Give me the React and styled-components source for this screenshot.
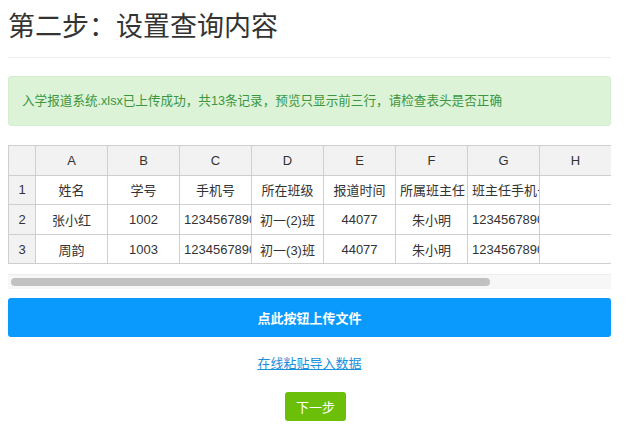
import React from "react";
import styled, { createGlobalStyle } from "styled-components";

const Global = createGlobalStyle`
  html, body { margin: 0; padding: 0; background: #fff; }
  body {
    padding: 8px;
    font-family: "Liberation Sans", Arial, "Noto Sans CJK SC", sans-serif;
    color: #333;
  }
`;

const Page = styled.div`
  width: 603px;
  display: flex;
  flex-direction: column;
`;

const Title = styled.h2`
  margin: 0;
  padding-top: 2px;
  font-size: 27px;
  line-height: 34px;
  font-weight: 400;
  color: #333;
`;

const Rule = styled.hr`
  margin: 13px 0 0;
  border: 0;
  border-top: 1px solid #eee;
`;

const Alert = styled.div`
  margin-top: 18px;
  height: 48px;
  padding: 0 13px;
  border: 1px solid #d3eecf;
  border-radius: 3px;
  background: #dcf3d8;
  color: #3b963d;
  font-size: 12.6px;
  line-height: 48px;
  white-space: nowrap;
`;

const Viewport = styled.div`
  margin-top: 19px;
  overflow: hidden;
`;

const Sheet = styled.table`
  border-collapse: collapse;
  table-layout: fixed;
  width: 747px;
`;

const Cell = styled.td`
  height: 29.6px;
  padding: 0 4px;
  border: 1px solid #cfcfcf;
  background: ${(p) => (p.$head ? "#f2f2f2" : "#fff")};
  font-size: 13px;
  color: #333;
  text-align: center;
  white-space: nowrap;
  overflow: hidden;
  box-sizing: border-box;
`;

const Track = styled.div`
  margin-top: 10px;
  height: 15px;
  box-sizing: border-box;
  border-top: 1px solid #ececec;
  background: #f7f7f7;
  padding: 3px 0 0 3px;
`;

const Thumb = styled.div`
  height: 8px;
  border-radius: 4px;
  background: #c1c1c1;
`;

const UploadButton = styled.button`
  margin-top: 9px;
  height: 39px;
  border: 0;
  border-radius: 3px;
  background: #0a99fd;
  color: #fff;
  font-family: inherit;
  font-size: 13px;
  font-weight: 700;
  cursor: pointer;
`;

const LinkRow = styled.div`
  margin-top: 16px;
  text-align: center;
  line-height: 20px;
`;

const PasteLink = styled.a`
  color: #1a8fdc;
  font-size: 13px;
  text-decoration: underline;
  cursor: pointer;
`;

const NextRow = styled.div`
  margin-top: 18px;
  display: flex;
  justify-content: center;
  padding-left: 12px;
`;

const NextButton = styled.button`
  width: 61px;
  height: 29px;
  border: 0;
  border-radius: 3px;
  background: #6bbf08;
  color: #fff;
  font-family: inherit;
  font-size: 13px;
  cursor: pointer;
`;

const cols = ["A", "B", "C", "D", "E", "F", "G", "H", "I", "J"];
const rows = [
  ["姓名", "学号", "手机号", "所在班级", "报道时间", "所属班主任", "班主任手机号", "", "", ""],
  ["张小红", "1002", "12345678901", "初一(2)班", "44077", "朱小明", "12345678901", "", "", ""],
  ["周韵", "1003", "12345678901", "初一(3)班", "44077", "朱小明", "12345678901", "", "", ""],
];

const sheetWidth = 27 + cols.length * 72;
const viewWidth = 603;
const thumbWidth = Math.round((viewWidth / sheetWidth) * viewWidth) - 8;

export default function App() {
  return (
    <>
      <Global />
      <Page>
        <Title>第二步：设置查询内容</Title>
        <Rule />
        <Alert>
          入学报道系统.xlsx已上传成功，共13条记录，预览只显示前三行，请检查表头是否正确
        </Alert>
        <Viewport>
          <Sheet>
            <colgroup>
              <col style={{ width: 27 }} />
              {cols.map((c) => (
                <col key={c} style={{ width: 72 }} />
              ))}
            </colgroup>
            <tbody>
              <tr>
                <Cell $head />
                {cols.map((c) => (
                  <Cell key={c} $head>
                    {c}
                  </Cell>
                ))}
              </tr>
              {rows.map((r, i) => (
                <tr key={i}>
                  <Cell $head>{i + 1}</Cell>
                  {r.map((v, j) => (
                    <Cell key={j}>{v}</Cell>
                  ))}
                </tr>
              ))}
            </tbody>
          </Sheet>
        </Viewport>
        <Track>
          <Thumb style={{ width: thumbWidth }} />
        </Track>
        <UploadButton>点此按钮上传文件</UploadButton>
        <LinkRow>
          <PasteLink>在线粘贴导入数据</PasteLink>
        </LinkRow>
        <NextRow>
          <NextButton>下一步</NextButton>
        </NextRow>
      </Page>
    </>
  );
}
